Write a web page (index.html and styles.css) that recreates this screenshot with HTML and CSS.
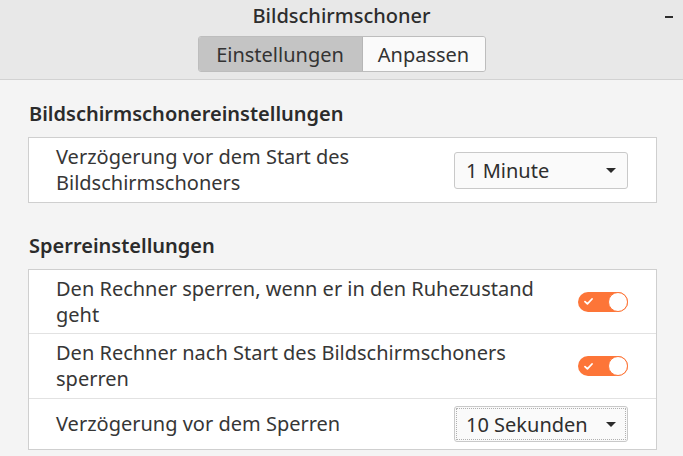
FILE: index.html
```html
<!DOCTYPE html>
<html lang="de">
<head>
<meta charset="utf-8">
<title>Bildschirmschoner</title>
<link rel="stylesheet" href="styles.css">
</head>
<body>
<div class="window">
  <header class="titlebar">
    <div class="title-row">
      <span class="title">Bildschirmschoner</span>
      <span class="minimize" aria-label="Minimieren"></span>
    </div>
    <div class="tabs">
      <button class="tab active">Einstellungen</button>
      <button class="tab">Anpassen</button>
    </div>
  </header>
  <main class="content">
    <h2 class="section-title">Bildschirmschonereinstellungen</h2>
    <div class="panel">
      <div class="row row-tall">
        <span class="label">Verzögerung vor dem Start des<br>Bildschirmschoners</span>
        <div class="combo"><span>1 Minute</span><span class="arrow"></span></div>
      </div>
    </div>
    <h2 class="section-title second">Sperreinstellungen</h2>
    <div class="panel">
      <div class="row row-tall row-first">
        <span class="label">Den Rechner sperren, wenn er in den Ruhezustand<br>geht</span>
        <div class="switch"><svg class="check" width="9" height="7" viewBox="0 0 9 7"><path d="M1 3.6 L3.4 5.8 L8 1" fill="none" stroke="#fff" stroke-width="1.8" stroke-linecap="round" stroke-linejoin="round"/></svg><span class="knob"></span></div>
      </div>
      <div class="row row-tall row-mid">
        <span class="label">Den Rechner nach Start des Bildschirmschoners<br>sperren</span>
        <div class="switch"><svg class="check" width="9" height="7" viewBox="0 0 9 7"><path d="M1 3.6 L3.4 5.8 L8 1" fill="none" stroke="#fff" stroke-width="1.8" stroke-linecap="round" stroke-linejoin="round"/></svg><span class="knob"></span></div>
      </div>
      <div class="row row-short">
        <span class="label">Verzögerung vor dem Sperren</span>
        <div class="combo focused"><span>10 Sekunden</span><span class="arrow"></span></div>
      </div>
    </div>
  </main>
</div>
</body>
</html>
```
FILE: styles.css
```css
* { box-sizing: border-box; }
html, body {
  margin: 0;
  padding: 0;
  width: 683px;
  height: 456px;
  overflow: hidden;
  background: #f4f4f4;
  font-family: "Noto Sans", "DejaVu Sans", sans-serif;
  color: #363636;
}
.titlebar {
  background: #e8e8e8;
  border-bottom: 1px solid #d2d2d2;
  height: 80px;
  display: flex;
  flex-direction: column;
  align-items: center;
}
.title-row {
  position: relative;
  width: 100%;
  height: 36px;
  display: flex;
  align-items: center;
  justify-content: center;
}
.title {
  font-size: 20px;
  font-weight: 500;
  color: #2d2d2d;
  margin-top: -6px;
}
.minimize {
  position: absolute;
  right: 10px;
  top: 16px;
  width: 8px;
  height: 2px;
  background: #2d2d2d;
}
.tabs {
  display: flex;
  height: 36px;
  border: 1px solid #bdbdbd;
  border-radius: 3px;
  overflow: hidden;
}
.tab {
  font-family: inherit;
  font-size: 20px;
  color: #333;
  border: none;
  background: #fafafa;
  padding: 0;
  margin: 0;
  height: 100%;
}
.tab.active {
  background: #c4c4c4;
  border-right: 1px solid #b6b6b6;
  width: 164px;
}
.tab:not(.active) { width: 122px; }
.content {
  padding: 0 26px 0 28px;
}
.section-title {
  margin: 0;
  font-size: 20px;
  font-weight: 600;
  color: #2b2b2b;
  padding: 22px 0 11px 1px;
  line-height: 24px;
}
.section-title.second {
  padding-top: 31px;
}
.panel {
  background: #fff;
  border: 1px solid #cfcfcf;
}
.row {
  display: flex;
  align-items: center;
  justify-content: space-between;
  padding: 0 28px 0 27px;
}
.row + .row { border-top: 1px solid #e2e2e2; }
.row-tall { height: 64px; }
.row-tall.row-first { height: 63px; }
.row-tall.row-mid { height: 65px; }
.row-short { height: 51px; }
.label {
  font-size: 20px;
  line-height: 26px;
  color: #363636;
}
.combo {
  width: 174px;
  height: 37px;
  border: 1px solid #c9c9c9;
  border-radius: 3px;
  background: #fafafa;
  display: flex;
  align-items: center;
  justify-content: space-between;
  padding: 0 11px 0 11px;
  font-size: 20px;
  color: #2e2e2e;
}
.combo.focused {
  height: 36px;
  outline: 1px dotted #b0b0b0;
  outline-offset: -3px;
}
.arrow {
  width: 0;
  height: 0;
  border-left: 5px solid transparent;
  border-right: 5px solid transparent;
  border-top: 5px solid #2b2b2b;
}
.switch {
  position: relative;
  width: 50px;
  height: 20px;
  border-radius: 10px;
  background: #fd7538;
  display: flex;
  align-items: center;
  padding-left: 6px;
}
.knob {
  position: absolute;
  right: 0;
  top: 0;
  width: 20px;
  height: 20px;
  border-radius: 50%;
  background: #fff;
  border: 1px solid #fd7538;
}
```
